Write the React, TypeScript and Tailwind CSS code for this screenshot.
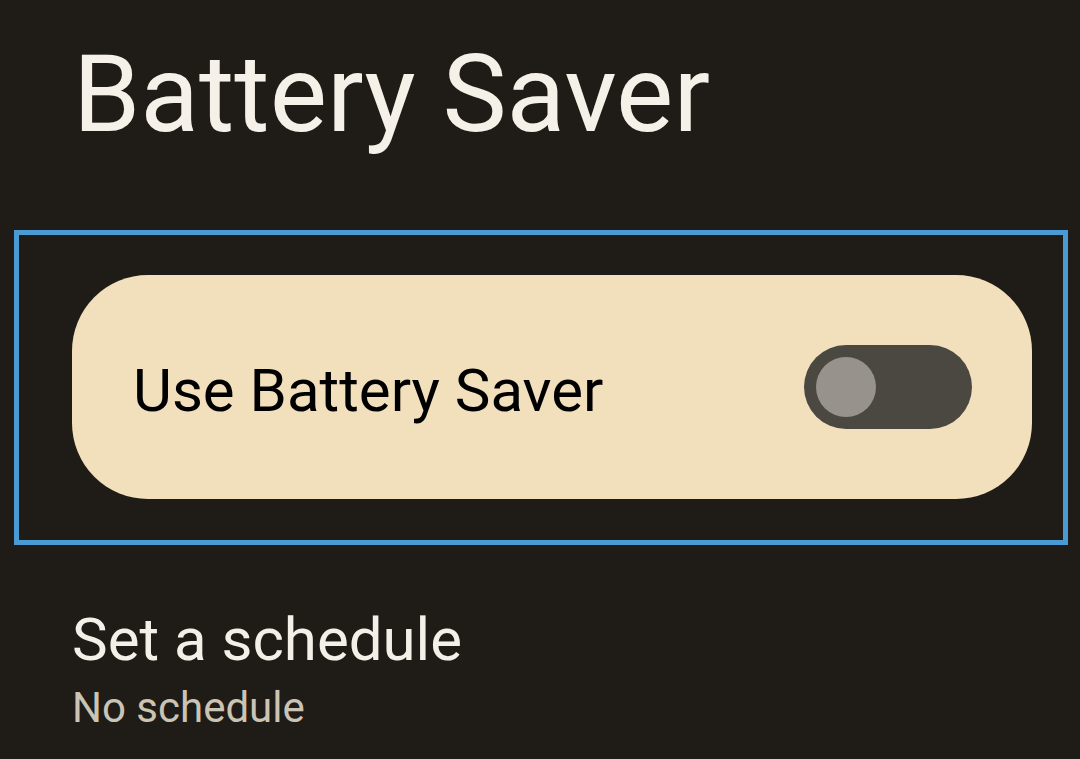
export default function App() {
  return (
    <div
      className="w-[1080px] h-[759px] overflow-hidden bg-[#1f1c18] flex flex-col"
      style={{ fontFamily: "Roboto, 'Noto Sans', sans-serif" }}
    >
      <h1 className="pt-[40px] pl-[73px] text-[108px] leading-[108px] font-normal text-[#f6f1e8]">
        Battery Saver
      </h1>

      {/* highlighted toggle row */}
      <div className="mt-[82px] ml-[14px] w-[1054px] h-[315px] border-[5px] border-[#4a9bd4] pt-[40px] pl-[53px]">
        <div className="w-[960px] h-[224px] rounded-[76px] bg-[#f2e0bc] flex items-center justify-between pl-[61px] pr-[60px]">
          <span className="pt-[7px] text-[60px] leading-[70px] text-black">Use Battery Saver</span>
          <div className="w-[168px] h-[84px] rounded-full bg-[#4b4841] flex items-center pl-[12px]">
            <div className="w-[60px] h-[60px] rounded-full bg-[#97938c]" />
          </div>
        </div>
      </div>

      <div className="mt-[60px] pl-[72px] flex flex-col">
        <span className="text-[60px] leading-[70px] text-[#f5f0e7]">Set a schedule</span>
        <span className="mt-[8px] text-[42px] leading-[50px] text-[#cbc4b4]">No schedule</span>
      </div>
    </div>
  );
}
